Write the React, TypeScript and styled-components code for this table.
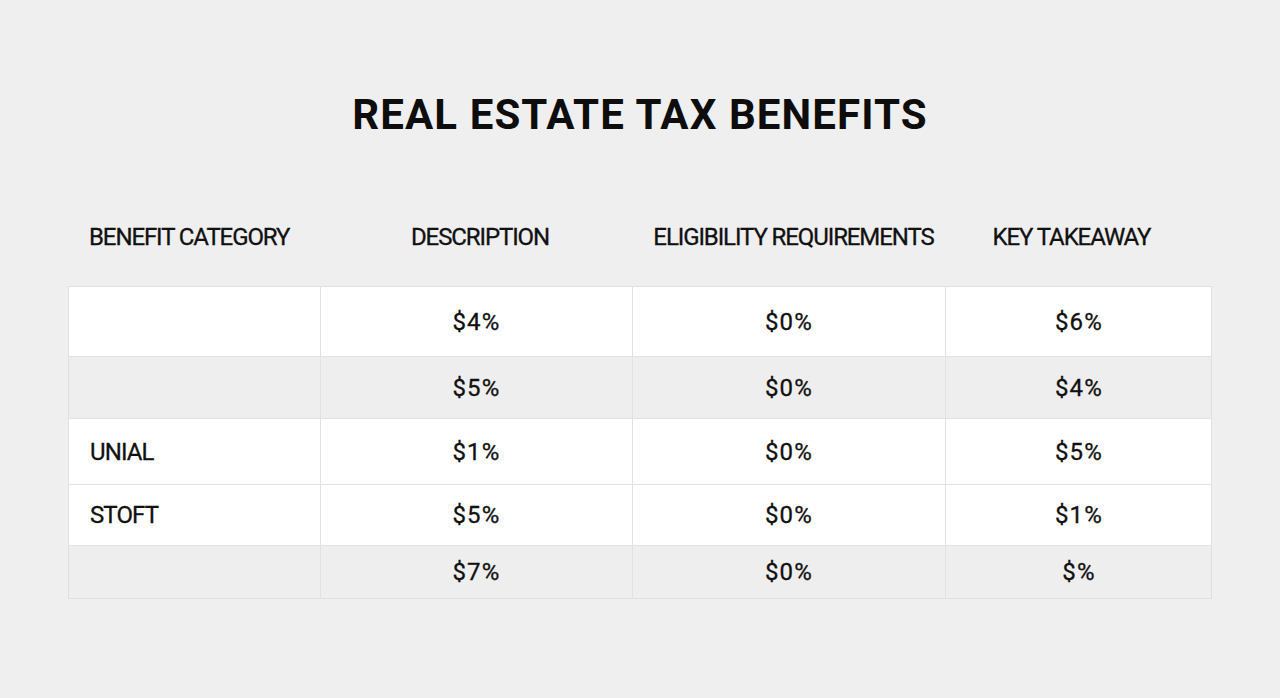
import { createGlobalStyle } from "styled-components";
import styled from "styled-components";

const GlobalStyle = createGlobalStyle`
  html, body {
    margin: 0;
    padding: 0;
    background: #efefef;
    font-family: Roboto, "Liberation Sans", sans-serif;
    color: #111;
  }
`;

const Page = styled.div`
  width: 1280px;
  height: 698px;
  box-sizing: border-box;
  padding: 88px 68px 0 68px;
  display: flex;
  flex-direction: column;
  align-items: stretch;
`;

const Title = styled.h1`
  margin: 0;
  text-align: center;
  font-size: 42px;
  font-weight: 700;
  line-height: 54px;
  letter-spacing: 1.1px;
  color: #0d0d0d;
`;

const Grid = styled.div`
  display: grid;
  grid-template-columns: 251px 312px 313px 267px;
`;

const HeadRow = styled(Grid)`
  margin-top: 67px;
  height: 56px;
  align-items: center;
`;

const HeadCell = styled.div<{ $left?: boolean; $shift?: number }>`
  font-size: 24px;
  font-weight: 400;
  letter-spacing: -1.1px;
  -webkit-text-stroke: 0.3px #111;
  text-align: ${(p) => (p.$left ? "left" : "center")};
  padding-left: ${(p) => (p.$left ? "21px" : "0")};
  transform: translateX(${(p) => p.$shift ?? 0}px);
  white-space: nowrap;
  color: #111;
`;

const Table = styled.div`
  margin-top: 21px;
  border: 1px solid #e0e0e0;
  display: flex;
  flex-direction: column;
`;

const Row = styled(Grid)<{ $shade: boolean; $h: number }>`
  height: ${(p) => p.$h}px;
  background: ${(p) => (p.$shade ? "#eeeeee" : "#ffffff")};
  & + & {
    border-top: 1px solid #e2e2e2;
  }
`;

const Cell = styled.div<{ $left?: boolean }>`
  display: flex;
  align-items: center;
  justify-content: ${(p) => (p.$left ? "flex-start" : "center")};
  padding-left: ${(p) => (p.$left ? "21px" : "0")};
  font-size: 24px;
  font-weight: 400;
  letter-spacing: ${(p) => (p.$left ? "-0.9px" : "1.2px")};
  -webkit-text-stroke: 0.3px #111;
  color: #111;
  & + & {
    border-left: 1px solid #e2e2e2;
  }
`;

const headers = [
  { label: "BENEFIT CATEGORY", left: true, shift: 0 },
  { label: "DESCRIPTION", left: false, shift: 5 },
  { label: "ELIGIBILITY REQUIREMENTS", left: false, shift: 6 },
  { label: "KEY TAKEAWAY", left: false, shift: -6 },
];

const rows = [
  { cells: ["", "$4%", "$0%", "$6%"], shade: false, h: 69 },
  { cells: ["", "$5%", "$0%", "$4%"], shade: true, h: 61 },
  { cells: ["UNIAL", "$1%", "$0%", "$5%"], shade: false, h: 65 },
  { cells: ["STOFT", "$5%", "$0%", "$1%"], shade: false, h: 60 },
  { cells: ["", "$7%", "$0%", "$%"], shade: true, h: 52 },
];

export default function App() {
  return (
    <>
      <GlobalStyle />
      <Page>
        <Title>REAL ESTATE TAX BENEFITS</Title>
        <HeadRow>
          {headers.map((h) => (
            <HeadCell key={h.label} $left={h.left} $shift={h.shift}>
              {h.label}
            </HeadCell>
          ))}
        </HeadRow>
        <Table>
          {rows.map((row, i) => (
            <Row key={i} $shade={row.shade} $h={row.h}>
              {row.cells.map((c, j) => (
                <Cell key={j} $left={j === 0}>
                  {c}
                </Cell>
              ))}
            </Row>
          ))}
        </Table>
      </Page>
    </>
  );
}
